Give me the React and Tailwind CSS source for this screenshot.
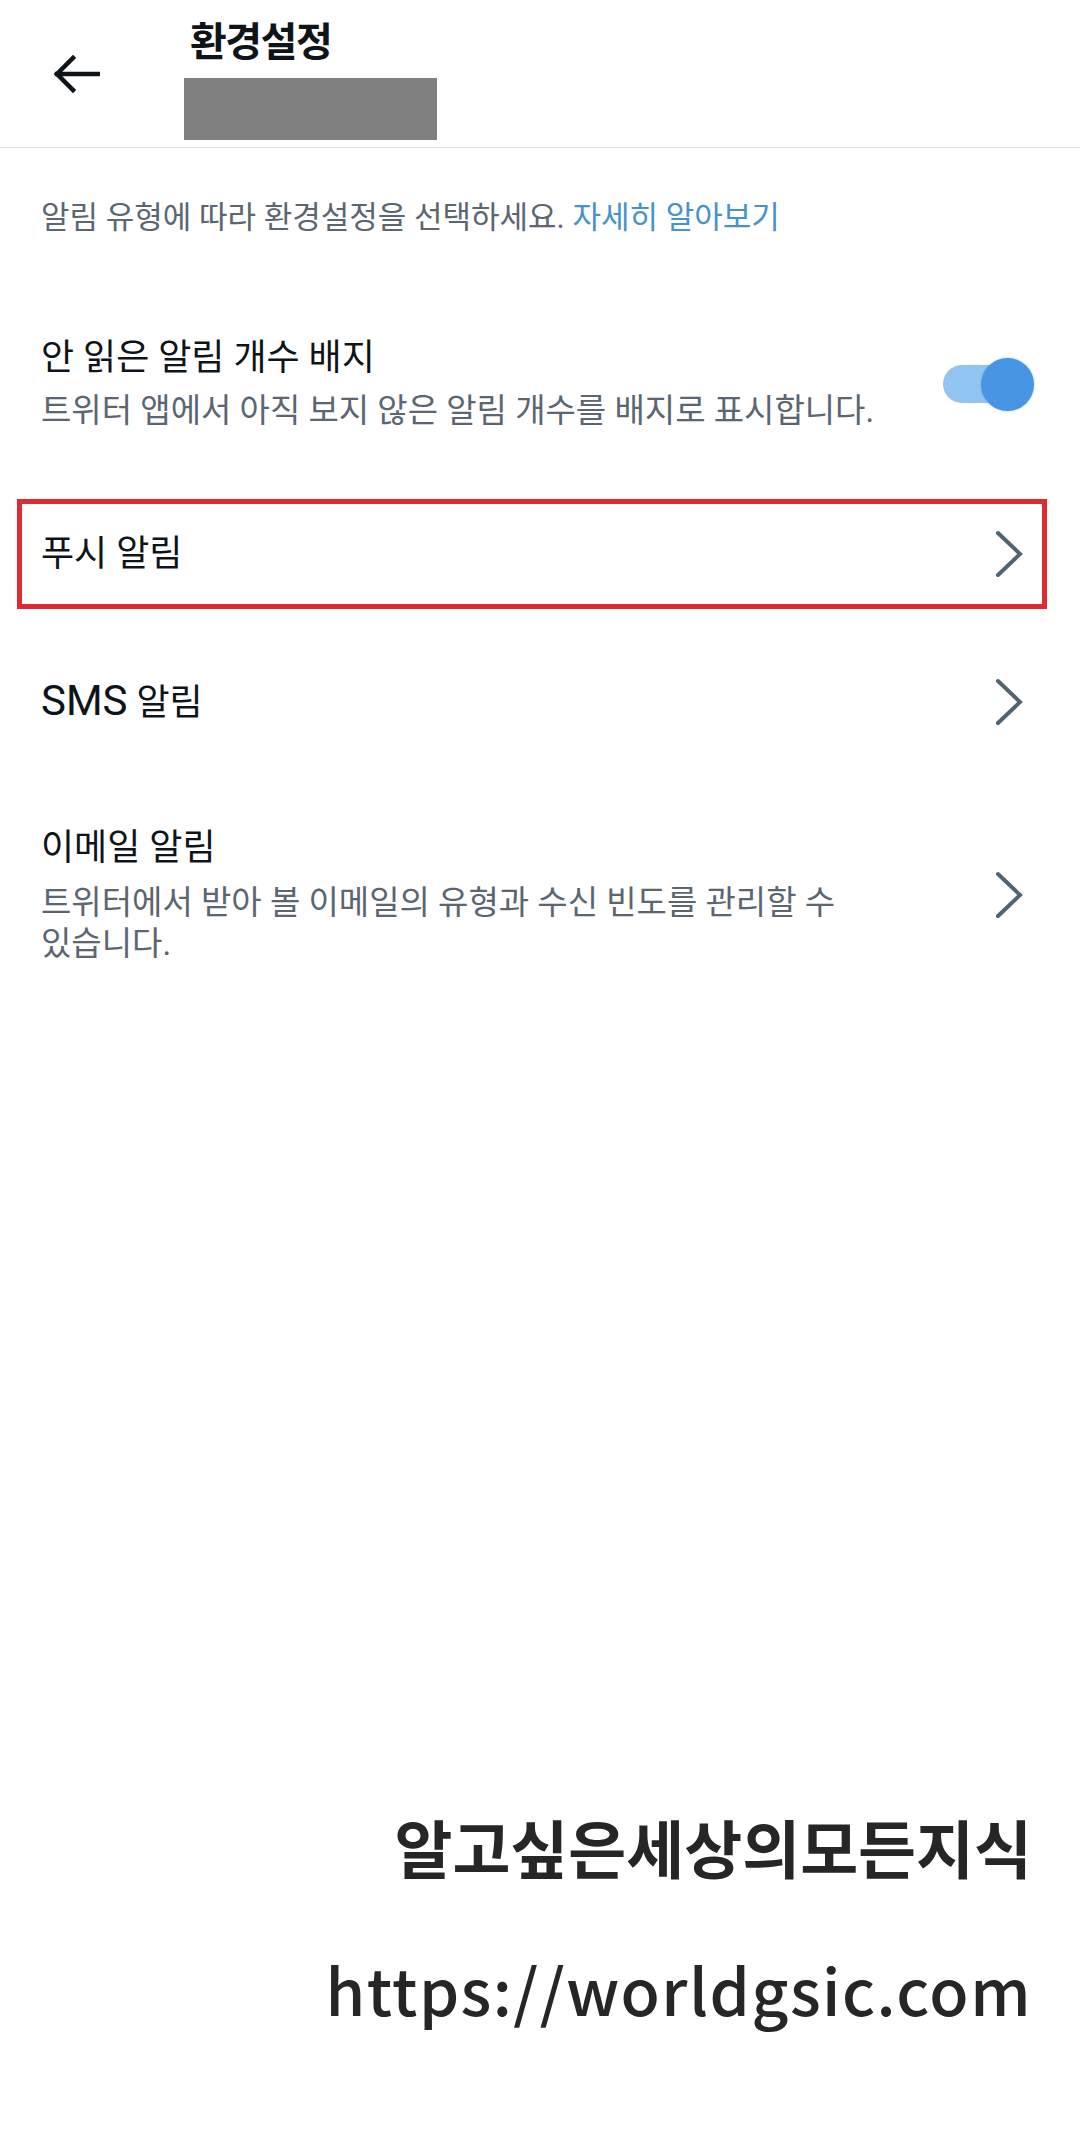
const FONT = { fontFamily: 'Roboto, "Noto Sans CJK KR", "Noto Sans", sans-serif' };
const MARK = { fontFamily: '"Noto Sans CJK KR", "Noto Sans", sans-serif' };

const BackArrow = () => (
  <svg width="48" height="42" viewBox="0 0 48 42" fill="none" stroke="#0f1419" strokeWidth="4.5" strokeLinecap="square">
    <path d="M46 21H5" />
    <path d="M21 5L5 21L21 37" strokeLinejoin="miter" />
  </svg>
);

const Chevron = () => (
  <svg width="30" height="48" viewBox="0 0 30 48" fill="none" stroke="#536471" strokeWidth="4" strokeLinecap="round" strokeLinejoin="miter">
    <path d="M4 3L26 24L4 45" />
  </svg>
);

const Toggle = () => (
  <div className="relative w-[91px] h-[53px] shrink-0">
    <div className="absolute left-0 top-[7.5px] w-[80px] h-[38px] rounded-full bg-[#91c5f1]" />
    <div className="absolute right-0 top-0 w-[53px] h-[53px] rounded-full bg-[#4896e3] shadow-[0_0_2px_rgba(72,150,227,0.6)]" />
  </div>
);

export default function App() {
  return (
    <div className="w-[1080px] h-[2156px] bg-white flex flex-col text-[#0f1419]" style={FONT}>
      {/* header */}
      <div className="h-[148px] border-b border-[#dfe2e4] flex items-start shrink-0">
        <div className="ml-[52px] mt-[53px]">
          <BackArrow />
        </div>
        <div className="ml-[84px] flex flex-col">
          <h1 className="pl-[6px] mt-[23px] text-[40px] leading-none font-bold tracking-[-1.5px]">환경설정</h1>
          <div className="mt-[15px] w-[253px] h-[62px] bg-[#808080]" />
        </div>
      </div>

      <p className="mt-[50px] pl-[41px] text-[31px] leading-[40px] text-[#5b6671]">
        알림 유형에 따라 환경설정을 선택하세요. <span className="text-[#4592cc]">자세히 알아보기</span>
      </p>

      {/* unread badge */}
      <div className="mt-[98px] pl-[41px] pr-[46px] flex items-center justify-between">
        <div>
          <div className="text-[36px] leading-[44px]">안 읽은 알림 개수 배지</div>
          <div className="mt-[10px] text-[33px] leading-[42px] text-[#5b6671]">트위터 앱에서 아직 보지 않은 알림 개수를 배지로 표시합니다.</div>
        </div>
        <Toggle />
      </div>

      {/* push, highlighted */}
      <div className="mt-[67px] ml-[17px] mr-[33px] h-[110px] border-[5px] border-[#df2a33] pl-[19px] pr-[18px] flex items-center justify-between">
        <span className="text-[36px] leading-[44px]">푸시 알림</span>
        <Chevron />
      </div>

      {/* sms */}
      <div className="mt-[38px] h-[110px] pl-[41px] pr-[56px] flex items-center justify-between">
        <span className="text-[36px] leading-[44px]"><span className="text-[42px]">SMS</span> 알림</span>
        <Chevron />
      </div>

      {/* email */}
      <div className="mt-[69px] pl-[41px] pr-[56px] flex items-center justify-between">
        <div>
          <div className="text-[36px] leading-[44px]">이메일 알림</div>
          <div className="mt-[12px] text-[33px] leading-[41px] text-[#5b6671]">
            트위터에서 받아 볼 이메일의 유형과 수신 빈도를 관리할 수<br />있습니다.
          </div>
        </div>
        <Chevron />
      </div>

      {/* watermark */}
      <div className="mt-auto pb-[136px] flex flex-col items-end text-[#262626]" style={MARK}>
        <div className="pr-[48px] text-[63px] leading-none font-bold">알고싶은세상의모든지식</div>
        <div className="mt-[79px] pr-[48px] text-[64px] leading-none font-medium tracking-[1.5px]">https://worldgsic.com</div>
      </div>
    </div>
  );
}
